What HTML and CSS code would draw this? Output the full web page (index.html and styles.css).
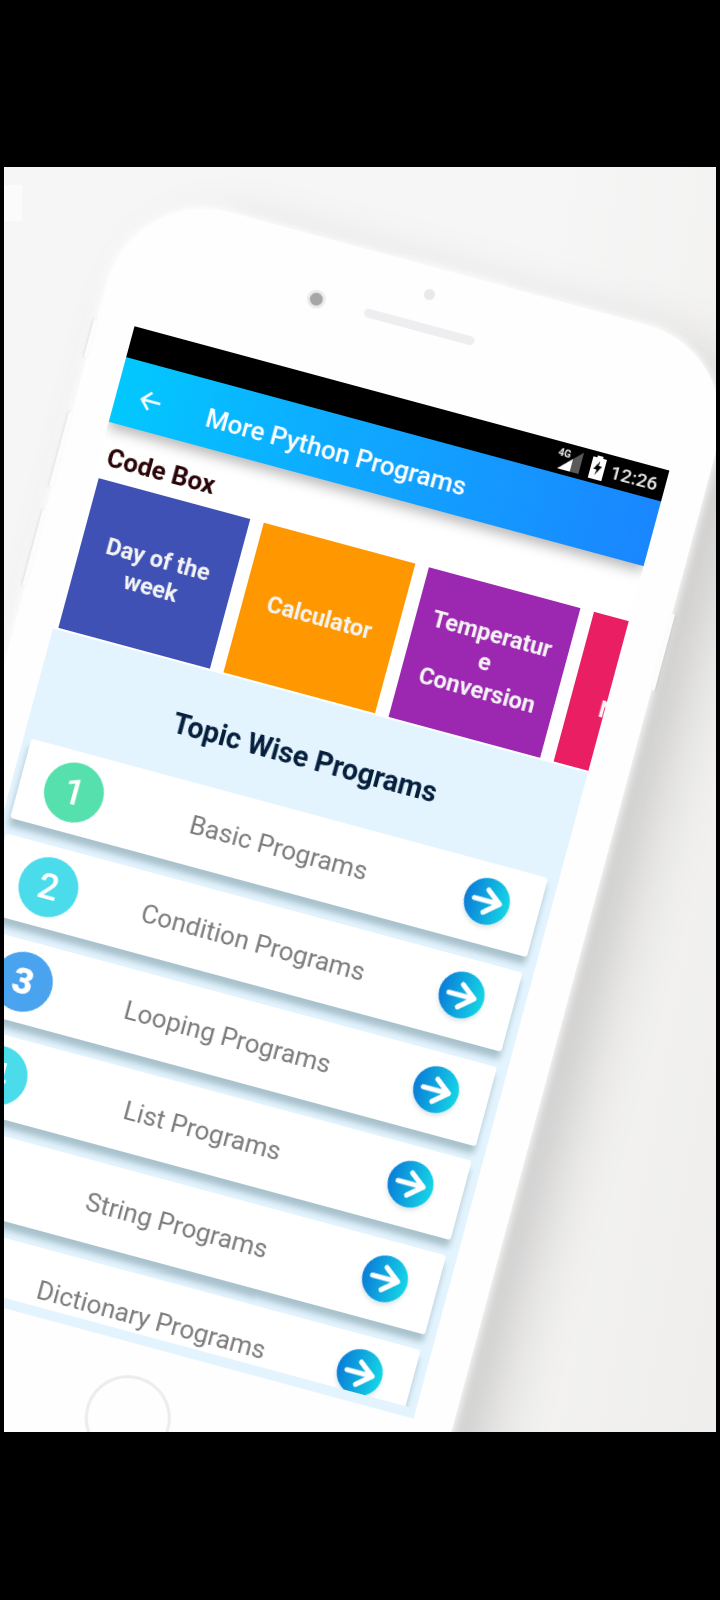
FILE: index.html
```html
<!DOCTYPE html>
<html>

<head>
    <title>More Python Programs</title>
    <link rel="stylesheet" href="styles.css">
</head>

<body>
    <div class="canvas">
        <div class="phone">
            <span class="side-btn btn-a"></span>
            <span class="side-btn btn-b"></span>
            <span class="side-btn btn-c"></span>
            <span class="side-btn btn-d"></span>

            <div class="phone-top">
                <span class="camera"></span>
                <span class="sensor"></span>
                <span class="speaker"></span>
            </div>

            <div class="screen">
                <div class="statusbar">
                    <span class="net">4G</span>
                    <svg class="signal" viewBox="0 0 22 22" width="22" height="22">
                        <path d="M22 0V22H0Z" fill="#5a5a5a" />
                        <path d="M13 9V22H0Z" fill="#fff" />
                    </svg>
                    <svg class="battery" viewBox="0 0 14 24" width="14" height="24">
                        <path d="M4 0H10V2H14V24H0V2H4Z" fill="#fff" />
                        <path d="M8 5L3 14H6.500L5.500 20L11 10H7.500Z" fill="#000" />
                    </svg>
                    <span class="time">12:26</span>
                </div>

                <div class="appbar">
                    <svg class="back" viewBox="0 0 26 26" width="23" height="23">
                        <path d="M24 13H3M12 3L2.500 13L12 23" fill="none" stroke="#fff" stroke-width="3" />
                    </svg>
                    <span class="appbar-title">More Python Programs</span>
                </div>

                <div class="codebox-label">Code Box</div>

                <div class="tiles">
                    <div class="tile tile-blue">Day of the week</div>
                    <div class="tile tile-orange">Calculator</div>
                    <div class="tile tile-purple">Temperature Conversion</div>
                    <div class="tile tile-pink">Prime Numbers</div>
                </div>

                <div class="panel">
                    <h2 class="panel-title">Topic Wise Programs</h2>
                    <div class="list">
                        <div class="card">
                            <span class="num num-green">1</span>
                            <span class="label">Basic Programs</span>
                            <span class="go"><svg viewBox="0 0 46 46" width="46" height="46"><path d="M10 23H36M22 12L36 23L22 35" fill="none" stroke="#fff" stroke-width="5" stroke-linecap="round" stroke-linejoin="round" /></svg></span>
                        </div>
                        <div class="card">
                            <span class="num num-cyan">2</span>
                            <span class="label">Condition Programs</span>
                            <span class="go"><svg viewBox="0 0 46 46" width="46" height="46"><path d="M10 23H36M22 12L36 23L22 35" fill="none" stroke="#fff" stroke-width="5" stroke-linecap="round" stroke-linejoin="round" /></svg></span>
                        </div>
                        <div class="card">
                            <span class="num num-blue num-bold">3</span>
                            <span class="label">Looping Programs</span>
                            <span class="go"><svg viewBox="0 0 46 46" width="46" height="46"><path d="M10 23H36M22 12L36 23L22 35" fill="none" stroke="#fff" stroke-width="5" stroke-linecap="round" stroke-linejoin="round" /></svg></span>
                        </div>
                        <div class="card">
                            <span class="num num-cyan">4</span>
                            <span class="label">List Programs</span>
                            <span class="go"><svg viewBox="0 0 46 46" width="46" height="46"><path d="M10 23H36M22 12L36 23L22 35" fill="none" stroke="#fff" stroke-width="5" stroke-linecap="round" stroke-linejoin="round" /></svg></span>
                        </div>
                        <div class="card">
                            <span class="num num-cyan"></span>
                            <span class="label">String Programs</span>
                            <span class="go"><svg viewBox="0 0 46 46" width="46" height="46"><path d="M10 23H36M22 12L36 23L22 35" fill="none" stroke="#fff" stroke-width="5" stroke-linecap="round" stroke-linejoin="round" /></svg></span>
                        </div>
                        <div class="card">
                            <span class="num num-cyan"></span>
                            <span class="label">Dictionary Programs</span>
                            <span class="go"><svg viewBox="0 0 46 46" width="46" height="46"><path d="M10 23H36M22 12L36 23L22 35" fill="none" stroke="#fff" stroke-width="5" stroke-linecap="round" stroke-linejoin="round" /></svg></span>
                        </div>
                    </div>
                </div>
            </div>

            <div class="home"></div>
        </div>
    </div>
</body>

</html>
```

FILE: styles.css
```css
html,
body {
    margin: 0;
    padding: 0;
    background: #000;
    font-family: Roboto, "Liberation Sans", sans-serif;
}

body {
    height: 1600px;
    overflow: hidden;
    padding: 167px 4px 0;
    box-sizing: border-box;
}

/* grey photo backdrop the phone lies on */
.canvas {
    position: relative;
    height: 1265px;
    overflow: hidden;
    background:
        linear-gradient(#fcfbfc, #fcfbfc) no-repeat 0 18px / 18px 36px,
        linear-gradient(100deg, #f6f6f6 60%, #efeeec 100%);
}

.phone {
    position: absolute;
    left: 129px;
    top: 19px;
    width: 632px;
    height: 1400px;
    background: #fefefe;
    border-radius: 100px;
    transform-origin: 0 0;
    transform: rotate(15.1deg);
    box-shadow: 0 0 8px 2px rgba(255, 255, 255, 0.9), 34px 16px 60px rgba(0, 0, 0, 0.17);
    filter: blur(0.4px);
}

.side-btn {
    position: absolute;
    left: -3px;
    width: 4px;
    background: #fcfcfc;
    border-radius: 2px;
    box-shadow: -1px 0 3px rgba(0, 0, 0, 0.1);
}

.btn-a {
    top: 138px;
    height: 40px;
}

.btn-b {
    top: 234px;
    height: 78px;
}

.btn-c {
    top: 335px;
    height: 80px;
}

.btn-d {
    left: auto;
    right: -3px;
    top: 272px;
    height: 80px;
    box-shadow: 1px 0 3px rgba(0, 0, 0, 0.1);
}

.phone-top {
    position: relative;
    height: 135px;
}

.camera {
    position: absolute;
    left: 197px;
    top: 52px;
    width: 13px;
    height: 13px;
    background: #a6a6a8;
    border: 3px solid #ececec;
    border-radius: 50%;
}

.sensor {
    position: absolute;
    left: 309px;
    top: 22px;
    width: 11px;
    height: 11px;
    background: #e9e9eb;
    border-radius: 50%;
}

.speaker {
    position: absolute;
    left: 256px;
    top: 57px;
    width: 114px;
    height: 9px;
    background: #eeeef0;
    border-radius: 5px;
}

.screen {
    width: 554px;
    margin-left: 38px;
    background: #fff;
    overflow: hidden;
}

.statusbar {
    height: 32px;
    background: #000;
    color: #e8e8e8;
    display: flex;
    align-items: center;
    justify-content: flex-end;
    padding-right: 8px;
}

.net {
    font-size: 10px;
    font-weight: 700;
    margin-right: -10px;
    margin-bottom: 12px;
}

.signal {
    margin-right: 10px;
}

.battery {
    margin-right: 7px;
}

.time {
    font-size: 19px;
    font-weight: 500;
}

.appbar {
    position: relative;
    height: 67px;
    background: linear-gradient(90deg, #02c8ff, #0eaaff 40%, #1a86ff);
    color: #fff;
    display: flex;
    align-items: center;
    padding-left: 24px;
    box-shadow: 0 6px 12px rgba(0, 0, 0, 0.28);
}

.back {
    margin: 6px 46px 0 0;
}

.appbar-title {
    margin-top: 6px;
    font-size: 26px;
    font-weight: 500;
}

.codebox-label {
    height: 57px;
    padding: 20px 0 0 8px;
    box-sizing: border-box;
    font-size: 26px;
    line-height: 28px;
    font-weight: 700;
    color: #2a0508;
}

.tiles {
    display: flex;
    gap: 14px;
    padding: 0 0 2px 5px;
}

.tile {
    flex: 0 0 157px;
    height: 155px;
    box-sizing: border-box;
    padding: 0 14px;
    display: flex;
    align-items: center;
    justify-content: center;
    text-align: center;
    overflow-wrap: anywhere;
    color: #f4f4f4;
    font-size: 23.5px;
    line-height: 29px;
    font-weight: 700;
}

.tile-blue {
    background: #3f51b5;
}

.tile-orange {
    background: #ff9800;
}

.tile-purple {
    background: #9c27b0;
}

.tile-pink {
    background: #e91e63;
}

.panel {
    background: #e3f4fe;
    padding-bottom: 10px;
}

.panel-title {
    margin: 0;
    padding: 34px 0 27px;
    text-align: center;
    font-size: 28.6px;
    line-height: 51px;
    font-weight: 700;
    color: #061f3c;
}

.list {
    height: 547px;
    overflow: hidden;
    padding: 0 11px 0 8px;
}

.card {
    height: 82px;
    margin-bottom: 15.8px;
    background: #fff;
    border-radius: 3px;
    box-shadow: 0 8px 6px rgba(130, 160, 170, 0.6);
    display: grid;
    grid-template-columns: 60px 1fr 46px;
    align-items: center;
    padding: 0 30px 0 25px;
}

.num {
    width: 60px;
    height: 60px;
    border-radius: 50%;
    display: flex;
    align-items: center;
    justify-content: center;
    color: #fff;
    font-size: 36px;
    font-weight: 500;
}

.num-bold {
    font-weight: 900;
}

.num-green {
    background: #55e0ad;
}

.num-cyan {
    background: #4bdcec;
}

.num-blue {
    background: #4aa3ee;
}

.label {
    text-align: center;
    padding-right: 10px;
    font-size: 26px;
    color: #7c7c7c;
}

.go {
    width: 46px;
    height: 47px;
    margin-bottom: 6px;
    border-radius: 50%;
    background: linear-gradient(90deg, #0a7cd8, #15d6e6);
    box-shadow: 0 3px 4px rgba(120, 150, 160, 0.25);
    display: flex;
    align-items: center;
}

.home {
    width: 80px;
    height: 80px;
    margin: 31px 0 0 273px;
    border: 3px solid #ececec;
    border-radius: 50%;
}
```
